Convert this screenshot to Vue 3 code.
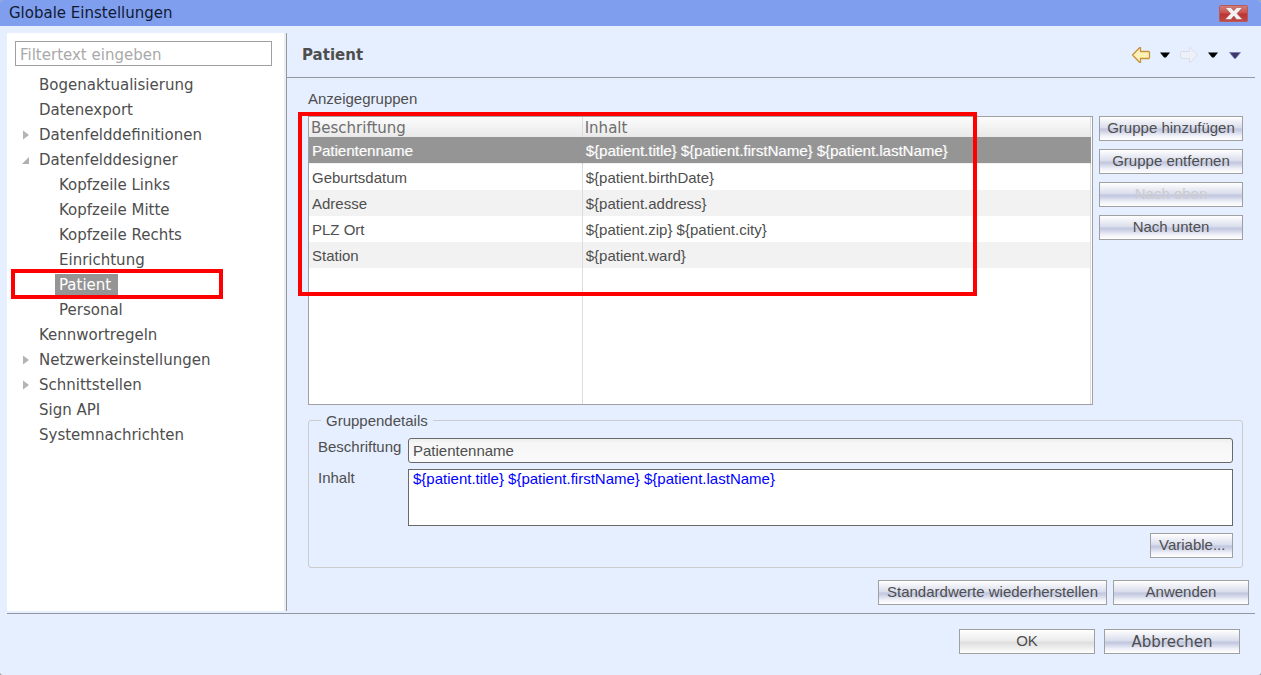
<script setup>
import { ref } from 'vue'

const filter = ref('')
const caption = ref('Patientenname')
const content = ref('${patient.title} ${patient.firstName} ${patient.lastName}')

const tree = [
  { label: 'Bogenaktualisierung' },
  { label: 'Datenexport' },
  { label: 'Datenfelddefinitionen', state: 'closed' },
  { label: 'Datenfelddesigner', state: 'open' },
  { label: 'Kopfzeile Links', child: true },
  { label: 'Kopfzeile Mitte', child: true },
  { label: 'Kopfzeile Rechts', child: true },
  { label: 'Einrichtung', child: true },
  { label: 'Patient', child: true, selected: true },
  { label: 'Personal', child: true },
  { label: 'Kennwortregeln' },
  { label: 'Netzwerkeinstellungen', state: 'closed' },
  { label: 'Schnittstellen', state: 'closed' },
  { label: 'Sign API' },
  { label: 'Systemnachrichten' }
]

const rows = [
  { name: 'Patientenname', value: '${patient.title} ${patient.firstName} ${patient.lastName}', selected: true },
  { name: 'Geburtsdatum', value: '${patient.birthDate}' },
  { name: 'Adresse', value: '${patient.address}' },
  { name: 'PLZ Ort', value: '${patient.zip} ${patient.city}' },
  { name: 'Station', value: '${patient.ward}' }
]
</script>

<template>
  <div class="window">
    <header class="titlebar">
      <span>Globale Einstellungen</span>
      <button class="close" type="button" aria-label="Schließen">
        <svg width="29" height="17" viewBox="0 0 29 17">
          <defs>
            <linearGradient id="closeRed" x1="0" y1="0" x2="0" y2="1">
              <stop offset="0" stop-color="#d4827c" />
              <stop offset="0.45" stop-color="#c9524e" />
              <stop offset="0.55" stop-color="#bb3432" />
              <stop offset="1" stop-color="#bf4a48" />
            </linearGradient>
          </defs>
          <rect x="0.5" y="0.5" width="28" height="16" rx="1" fill="url(#closeRed)" stroke="#b85a5c" />
          <path d="M6 2.500h6l2.800 3.300L17.600 2.500h6l-5.600 6L23.600 14.500h-6l-2.800-3.500-2.800 3.500H6l5.600-6z" fill="#f4f1f3" stroke="#ab5050" stroke-width="0.600" />
        </svg>
      </button>
    </header>

    <div class="body">
      <nav class="sidebar">
        <input v-model="filter" class="filter" type="text" placeholder="Filtertext eingeben" aria-label="Filtertext eingeben" />
        <ul class="tree">
          <li v-for="item in tree" :key="item.label" :class="{ child: item.child }">
            <span class="twisty">
              <svg v-if="item.state === 'closed'" width="8" height="10" viewBox="0 0 8 10"><path d="M1 0.500l6 4.500-6 4.500z" fill="#b4b4b4" /></svg>
              <svg v-if="item.state === 'open'" width="8" height="10" viewBox="0 0 8 10"><path d="M7 2v7H0z" fill="#b0b0b0" /></svg>
            </span>
            <a href="#" :class="{ selected: item.selected }">{{ item.label }}</a>
            <span v-if="item.selected" class="marker nav-marker"></span>
          </li>
        </ul>
      </nav>

      <main class="page">
        <div class="page-head">
          <h1>Patient</h1>
          <div class="tools">
            <button type="button" aria-label="Zurück">
              <svg width="20" height="18" viewBox="0 0 20 18">
                <path d="M1.500 9L8.500 1.700h1V5.500h8q1 0 1 1v5q0 1-1 1h-8v3.800h-1z" fill="#fff0b8" stroke="#c6923a" stroke-width="1.300" stroke-linejoin="round" />
              </svg>
            </button>
            <button type="button" class="drop" aria-label="Verlauf zurück">
              <svg width="10" height="6" viewBox="0 0 10 6"><path d="M0 0.500h10L6 5.500H4z" fill="#000" /></svg>
            </button>
            <button type="button" aria-label="Vorwärts" disabled>
              <svg width="20" height="18" viewBox="0 0 20 18">
                <path d="M18.500 9L11.500 1.700h-1V5.500h-8q-1 0-1 1v5q0 1 1 1h8v3.800h1z" fill="#edf0f8" stroke="#d9ddec" stroke-linejoin="round" />
              </svg>
            </button>
            <button type="button" class="drop" aria-label="Verlauf vorwärts">
              <svg width="10" height="6" viewBox="0 0 10 6"><path d="M0 0.500h10L6 5.500H4z" fill="#000" /></svg>
            </button>
            <button type="button" class="menu" aria-label="Menü">
              <svg width="12" height="7" viewBox="0 0 12 7"><path d="M0.500 0.500h11L6.500 6.500h-1z" fill="#3b3768" stroke="#7a74b4" stroke-width="0.700" /></svg>
            </button>
          </div>
        </div>

        <div class="content">
          <h2>Anzeigegruppen</h2>
          <div class="groups">
            <div class="table-box">
              <table>
                <thead>
                  <tr><th scope="col">Beschriftung</th><th scope="col">Inhalt</th></tr>
                </thead>
                <tbody>
                  <tr v-for="row in rows" :key="row.name" :class="{ current: row.selected }">
                    <td>{{ row.name }}</td>
                    <td>{{ row.value }}</td>
                  </tr>
                  <tr class="rest"><td></td><td></td></tr>
                </tbody>
              </table>
              <span class="marker table-marker"></span>
            </div>
            <div class="actions">
              <button class="btn" type="button">Gruppe hinzufügen</button>
              <button class="btn" type="button">Gruppe entfernen</button>
              <button class="btn" type="button" disabled>Nach oben</button>
              <button class="btn" type="button">Nach unten</button>
            </div>
          </div>

          <fieldset>
            <legend>Gruppendetails</legend>
            <div class="form">
              <label for="caption">Beschriftung</label>
              <input id="caption" v-model="caption" type="text" />
              <label for="content">Inhalt</label>
              <textarea id="content" v-model="content" spellcheck="false"></textarea>
              <button class="btn variable" type="button">Variable...</button>
            </div>
          </fieldset>
        </div>

        <div class="page-buttons">
          <button class="btn restore" type="button">Standardwerte wiederherstellen</button>
          <button class="btn wide" type="button">Anwenden</button>
        </div>
      </main>
    </div>

    <footer class="footer">
      <button class="btn wide default" type="button">OK</button>
      <button class="btn wide verdana" type="button">Abbrechen</button>
    </footer>
  </div>
</template>

<style>
body {
  background: #9a9a9a;
}
</style>

<style scoped>
* {
  box-sizing: border-box;
}

.window {
  display: flex;
  flex-direction: column;
  min-height: 100vh;
  overflow: hidden;
  border-radius: 3px;
  background: #e6efff;
  color: #4e4e4e;
  font: 15px/17px "Liberation Sans", Arial, sans-serif;
}

.titlebar {
  display: flex;
  align-items: center;
  justify-content: space-between;
  height: 26px;
  padding: 1px 13px 0 9px;
  background: #7f9eee;
  color: #111a33;
  font: 15px/25px Verdana, "DejaVu Sans", sans-serif;
}

.close,
.tools button {
  display: flex;
  padding: 0;
  border: 0;
  background: none;
}

.body {
  display: flex;
  flex: 1;
  margin: 7px 6px 0 7px;
  padding-bottom: 2px;
  border-bottom: 1px solid #95979e;
}

.sidebar {
  flex: 0 0 280px;
  padding: 8px 12px 8px 8px;
  border-right: 1px solid #95979e;
  background: #fff;
  box-shadow: inset -2px 0 #eeeef0;
  font-family: Verdana, "DejaVu Sans", sans-serif;
}

.filter {
  display: block;
  width: calc(100% - 2px);
  height: 25px;
  padding: 2px 4px 0;
  border: 1px solid #a0a0a0;
  background: #fff;
  font: 15px Verdana, "DejaVu Sans", sans-serif;
}

.filter::placeholder {
  color: #a9a9a9;
  opacity: 1;
}

.tree {
  margin: 6px 0 0;
  padding: 0;
  list-style: none;
}

.tree li {
  position: relative;
  display: flex;
  align-items: center;
  height: 25px;
}

.tree .twisty {
  display: flex;
  width: 20px;
  padding-left: 7px;
}

.tree .child .twisty {
  width: 40px;
}

.tree a {
  padding: 0 7px 0 4px;
  color: #4e4e4e;
  line-height: 22px;
  text-decoration: none;
}

.tree a.selected {
  background: #959595;
  color: #fff;
}

.marker {
  position: absolute;
  border: 4px solid #f00;
  pointer-events: none;
}

.nav-marker {
  top: -3px;
  bottom: -2px;
  left: -4px;
  width: 212px;
}

.page {
  display: flex;
  flex: 1;
  flex-direction: column;
  min-width: 0;
}

.page-head {
  display: flex;
  align-items: center;
  justify-content: space-between;
  height: 45px;
  padding: 0 14px 0 15px;
  border-bottom: 1px solid #95979e;
}

h1 {
  margin: 0;
  font: bold 15px/20px Verdana, "DejaVu Sans", sans-serif;
}

.tools {
  display: flex;
  align-items: center;
}

.tools .drop {
  padding: 0 9px;
}

.tools .menu {
  padding-left: 2px;
}

.content {
  display: flex;
  flex: 1;
  flex-direction: column;
  padding: 12px 12px 0 21px;
}

h2 {
  margin: 0 0 9px;
  font-size: 15px;
  font-weight: normal;
  line-height: 17px;
}

.groups {
  display: flex;
  flex: 1;
  gap: 6px;
}

.table-box {
  position: relative;
  display: flex;
  flex: 1;
  padding-right: 1px;
  border: 1px solid #a0a0a0;
  background: #fff;
}

table {
  width: 100%;
  border-collapse: separate;
  border-spacing: 0;
  table-layout: fixed;
}

th {
  height: 20px;
  padding: 3px 0 0 2px;
  overflow: hidden;
  border-right: 1px solid #dcdcdc;
  background: linear-gradient(#fcfcfc, #e9e9e9);
  color: #6e6e6e;
  font: 15px/17px Verdana, "DejaVu Sans", sans-serif;
  text-align: left;
}

th:first-child {
  width: 35%;
}

td {
  height: 26px;
  padding: 0 3px;
  border-right: 1px solid #dcdcdc;
}

tbody tr:nth-child(odd) td {
  background: #f2f2f2;
}

tbody .current td {
  height: 27px;
  border-right-color: #959595;
  border-bottom: 1px solid #f2f2f2;
  color: #fff;
  text-shadow: 1px 0 rgba(255, 255, 255, 0.3);
}

tbody tr.current:nth-child(odd) td {
  background: #959595;
}

tbody .rest td {
  height: auto;
  background: #fff;
}

.table-marker {
  top: -5px;
  left: -11px;
  width: 679px;
  height: 184px;
}

.actions {
  display: flex;
  flex: 0 0 144px;
  flex-direction: column;
  gap: 8px;
}

.btn {
  height: 25px;
  padding: 0 8px 1px;
  border: 1px solid #a0a0a0;
  background: linear-gradient(#fff, #d9ddec 47%, #c1c7e0 52%, #c9cee4 60%, #f0f1f8 82%, #fff);
  color: #4e4e4e;
  font: 15px/22px "Liberation Sans", Arial, sans-serif;
  white-space: nowrap;
}

.actions .btn {
  padding: 0 0 1px;
}

.btn:disabled {
  color: #ccc;
}

.btn.default {
  background: linear-gradient(#fff, #ececec 47%, #dedede 54%, #f0f0f0 80%, #fff);
}

.btn.wide {
  width: 136px;
}

.btn.restore {
  width: 229px;
}

.btn.verdana {
  padding: 1px 0 0;
  font-family: Verdana, "DejaVu Sans", sans-serif;
}

fieldset {
  min-width: 0;
  margin: 7px 0 0;
  padding: 9px 9px;
  border: 1px solid #ccc;
  border-radius: 3px;
}

legend {
  margin-left: 3px;
  padding: 0 5px;
  line-height: 17px;
}

.form {
  display: grid;
  grid-template-columns: 84px 1fr;
  column-gap: 6px;
  row-gap: 6px;
}

.form input,
.form textarea {
  width: 100%;
  margin: 0;
  border: 1px solid #696969;
  font: 15px/17px "Liberation Sans", Arial, sans-serif;
}

.form input {
  height: 25px;
  padding: 0 4px 1px;
  border-radius: 3px;
  background: linear-gradient(#eee, #f6f6f6 20%, #fafafa);
  color: #4e4e4e;
}

.form textarea {
  display: block;
  height: 57px;
  padding: 0 4px;
  background: #fff;
  color: #00f;
  resize: none;
}

.variable {
  grid-column: 2;
  justify-self: end;
  width: 83px;
  margin-top: 1px;
}

.page-buttons {
  display: flex;
  justify-content: flex-end;
  gap: 6px;
  padding: 12px 6px 6px;
}

.footer {
  display: flex;
  justify-content: flex-end;
  gap: 9px;
  padding: 15px 21px 21px;
}
</style>
